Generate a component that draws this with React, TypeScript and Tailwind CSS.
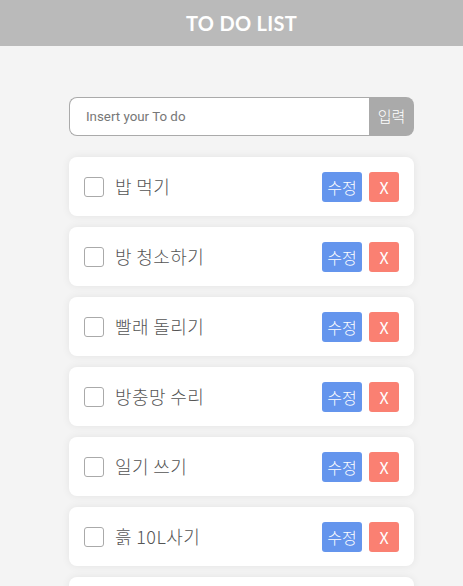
import { useState } from "react";

type Todo = { id: number; text: string; done: boolean };

const initialTodos: Todo[] = [
  { id: 1, text: "밥 먹기", done: false },
  { id: 2, text: "방 청소하기", done: false },
  { id: 3, text: "빨래 돌리기", done: false },
  { id: 4, text: "방충망 수리", done: false },
  { id: 5, text: "일기 쓰기", done: false },
  { id: 6, text: "흙 10L사기", done: false },
  { id: 7, text: "", done: false },
];

const App = () => {
  const [todos, setTodos] = useState<Todo[]>(initialTodos);
  const [input, setInput] = useState("");

  const addTodo = () => {
    if (!input.trim()) return;
    setTodos([...todos, { id: Date.now(), text: input, done: false }]);
    setInput("");
  };

  const toggle = (id: number) => {
    setTodos(todos.map(t => (t.id === id ? { ...t, done: !t.done } : t)));
  };

  const remove = (id: number) => {
    setTodos(todos.filter(t => t.id !== id));
  };

  return (
    <div className="min-h-screen bg-[#f4f4f4] font-['Noto_Sans_CJK_KR',sans-serif]">
      <header className="h-[46px] bg-[#bababa] flex items-center justify-center pl-[20px]">
        <h1 className="text-white text-[20px] font-bold tracking-[0.3px] font-['Lato','Noto_Sans',sans-serif]">
          TO DO LIST
        </h1>
      </header>

      <main className="w-[345px] ml-[69px] pt-[51px]">
        <div className="flex h-[39px] mb-[21px]">
          <input
            value={input}
            onChange={e => setInput(e.target.value)}
            placeholder="Insert your To do"
            className="flex-1 min-w-0 border border-[#aaaaaa] border-r-0 rounded-l-[8px] bg-white pl-[16px] text-[13.33px] text-[#555] placeholder:text-[#777] outline-none font-['Roboto',sans-serif]"
          />
          <button
            onClick={addTodo}
            className="w-[45px] bg-[#aaaaaa] text-white text-[15px] font-light rounded-r-[8px]"
          >
            입력
          </button>
        </div>

        <ul className="flex flex-col gap-[11px]">
          {todos.map(todo => (
            <li
              key={todo.id}
              className="h-[59px] bg-white rounded-[8px] shadow-[0_0_8px_rgba(0,0,0,0.07)] flex items-center px-[15px]"
            >
              <input
                type="checkbox"
                checked={todo.done}
                onChange={() => toggle(todo.id)}
                className="appearance-none w-[20px] h-[20px] border border-[#aaaaaa] rounded-[3px] bg-white shrink-0"
              />
              <span
                className={`ml-[11px] flex-1 text-[18px] font-light tracking-[0.4px] text-[#555] ${todo.done ? "line-through" : ""}`}
              >
                {todo.text}
              </span>
              <button className="w-[40px] h-[30px] bg-[#6495ed] text-white text-[16px] font-light rounded-[3px]">
                수정
              </button>
              <button
                onClick={() => remove(todo.id)}
                className="ml-[7px] w-[30px] h-[30px] bg-[#fa8072] text-white text-[16px] rounded-[3px]"
              >
                X
              </button>
            </li>
          ))}
        </ul>
      </main>
    </div>
  );
};

export default App;
